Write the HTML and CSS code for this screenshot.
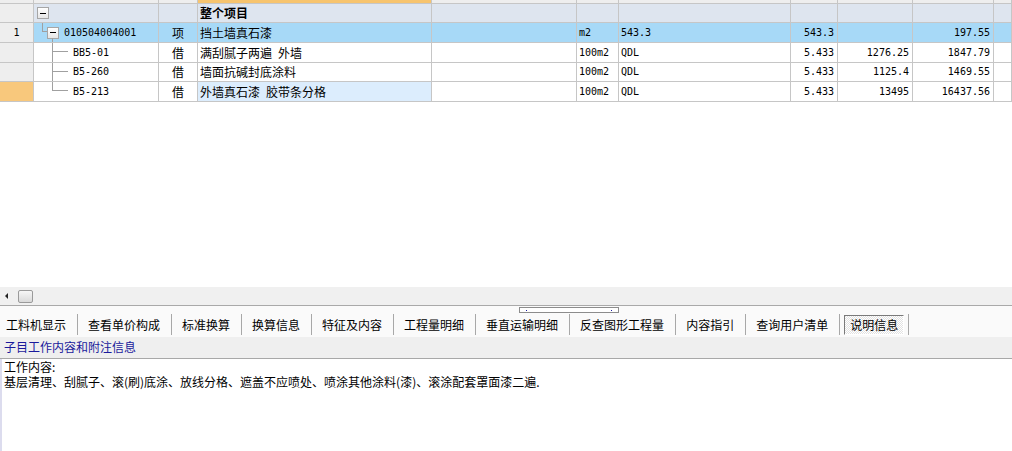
FILE: index.html
```html
<!DOCTYPE html>
<html lang="zh">
<head>
<meta charset="utf-8">
<link rel="stylesheet" href="styles.css">
</head>
<body>
<div class="app">
  <div class="grid-area">
    <div class="row r-top">
      <div class="cell"></div><div class="cell"></div><div class="cell"></div><div class="cell c-orange"></div><div class="cell"></div><div class="cell"></div><div class="cell"></div><div class="cell"></div><div class="cell"></div><div class="cell"></div><div class="cell"></div>
    </div>
    <div class="row r-head">
      <div class="cell c-rh"></div>
      <div class="cell tree"><span class="tbox tbox-root"></span></div>
      <div class="cell"></div>
      <div class="cell txt bold">整个项目</div>
      <div class="cell"></div><div class="cell"></div><div class="cell"></div><div class="cell"></div><div class="cell"></div><div class="cell"></div><div class="cell"></div>
    </div>
    <div class="row r-sel r20">
      <div class="cell c-rh num-c">1</div>
      <div class="cell tree tree-l1"><span class="tbox"></span><span class="code">010504004001</span></div>
      <div class="cell txt center">项</div>
      <div class="cell txt">挡土墙真石漆</div>
      <div class="cell"></div>
      <div class="cell mono">m2</div>
      <div class="cell mono">543.3</div>
      <div class="cell mono right">543.3</div>
      <div class="cell"></div>
      <div class="cell mono right">197.55</div>
      <div class="cell"></div>
    </div>
    <div class="row r-white r20">
      <div class="cell c-rh"></div>
      <div class="cell tree tree-child"><span class="code">BB5-01</span></div>
      <div class="cell txt center">借</div>
      <div class="cell txt">满刮腻子两遍&ensp;外墙</div>
      <div class="cell"></div>
      <div class="cell mono">100m2</div>
      <div class="cell mono">QDL</div>
      <div class="cell mono right">5.433</div>
      <div class="cell mono right">1276.25</div>
      <div class="cell mono right">1847.79</div>
      <div class="cell"></div>
    </div>
    <div class="row r-white r19">
      <div class="cell c-rh"></div>
      <div class="cell tree tree-child"><span class="code">B5-260</span></div>
      <div class="cell txt center">借</div>
      <div class="cell txt">墙面抗碱封底涂料</div>
      <div class="cell"></div>
      <div class="cell mono">100m2</div>
      <div class="cell mono">QDL</div>
      <div class="cell mono right">5.433</div>
      <div class="cell mono right">1125.4</div>
      <div class="cell mono right">1469.55</div>
      <div class="cell"></div>
    </div>
    <div class="row r-white r20">
      <div class="cell c-rh c-rh-cur"></div>
      <div class="cell tree tree-child tree-last"><span class="code">B5-213</span></div>
      <div class="cell txt center">借</div>
      <div class="cell txt c-focus">外墙真石漆&ensp;胶带条分格</div>
      <div class="cell"></div>
      <div class="cell mono">100m2</div>
      <div class="cell mono">QDL</div>
      <div class="cell mono right">5.433</div>
      <div class="cell mono right">13495</div>
      <div class="cell mono right">16437.56</div>
      <div class="cell"></div>
    </div>
  </div>

  <div class="hscroll">
    <span class="arrow-left"></span>
    <span class="thumb"></span>
  </div>

  <div class="tabbar">
    <div class="grip"><span class="dot"></span><span class="dot"></span></div>
    <div class="tabs">
      <span class="tab">工料机显示</span><span class="sep"></span>
      <span class="tab">查看单价构成</span><span class="sep"></span>
      <span class="tab">标准换算</span><span class="sep"></span>
      <span class="tab">换算信息</span><span class="sep"></span>
      <span class="tab">特征及内容</span><span class="sep"></span>
      <span class="tab">工程量明细</span><span class="sep"></span>
      <span class="tab">垂直运输明细</span><span class="sep"></span>
      <span class="tab">反查图形工程量</span><span class="sep"></span>
      <span class="tab">内容指引</span><span class="sep"></span>
      <span class="tab">查询用户清单</span><span class="sep sep-before-active"></span>
      <span class="tab tab-active">说明信息</span><span class="sep sep-after-active"></span>
    </div>
  </div>

  <div class="info-head">子目工作内容和附注信息</div>

  <div class="content">
    <div class="line">工作内容:</div>
    <div class="line">基层清理、刮腻子、滚(刷)底涂、放线分格、遮盖不应喷处、喷涂其他涂料(漆)、滚涂配套罩面漆二遍.</div>
  </div>
</div>
</body>
</html>
```

FILE: styles.css
```css
html, body {
  margin: 0;
  padding: 0;
  background: #ffffff;
}

body {
  width: 1012px;
  height: 451px;
  overflow: hidden;
  font-family: "Noto Sans CJK SC", "DejaVu Sans", sans-serif;
  font-size: 12px;
  color: #000;
}

.app {
  display: flex;
  flex-direction: column;
  width: 1012px;
  height: 451px;
}

/* ---------- grid ---------- */
.grid-area {
  height: 287px;
  background: #ffffff;
  flex: none;
}

.row {
  display: grid;
  grid-template-columns: 34px 125px 39px 234px 145px 42px 172px 47px 75px 81px 18px;
}

.cell {
  box-sizing: border-box;
  border-right: 1px solid #c6c6c6;
  border-bottom: 1px solid #c6c6c6;
  overflow: hidden;
  white-space: nowrap;
  padding: 0 2px;
}

.r-top { height: 4px; background: #eeeeee; }
.r-top .cell { padding: 0; }
.c-orange { background: #f7c46e; }

.r-head { height: 19px; background: #dee5ef; line-height: 18px; }
.r-sel { background: #a7d9f7; }
.r-white { background: #ffffff; }
.r20 { height: 20px; line-height: 19px; }
.r19 { height: 19px; line-height: 18px; }

.c-rh { background: #eeeeee; }
.c-rh-cur { background: #f8c87c; }
.c-focus { background: #dcedfd; }

.txt { font-size: 12px; }
.bold { font-weight: bold; }
.center { text-align: center; padding: 0; }
.right { text-align: right; padding-right: 3px; }

.mono, .code, .num-c {
  font-family: "DejaVu Sans Mono", "Liberation Mono", monospace;
  font-size: 10px;
}
.num-c { text-align: center; }

/* tree column */
.tree {
  position: relative;
  display: flex;
  align-items: center;
  padding: 0;
}

.tbox {
  flex: none;
  box-sizing: border-box;
  width: 12px;
  height: 12px;
  border: 1px solid #a6a6a6;
  background: linear-gradient(#ffffff, #e6e6e6);
  display: flex;
  align-items: center;
  justify-content: center;
}
.tbox::after {
  content: "";
  width: 6px;
  height: 1px;
  background: #000;
}
.tbox-root { margin-left: 3px; }

.tree-l1 .tbox { margin-left: 13px; }
.tree-l1 .code { margin-left: 5px; }

/* connector from root box to level-1 box */
.tree-l1::before {
  content: "";
  position: absolute;
  left: 8px;
  top: -5px;
  width: 5px;
  height: 14px;
  box-sizing: border-box;
  border-left: 1px solid #a0a0a0;
  border-bottom: 1px solid #a0a0a0;
}
/* line down from level-1 box */
.tree-l1::after {
  content: "";
  position: absolute;
  left: 18px;
  top: 15px;
  width: 1px;
  height: 5px;
  background: #a0a0a0;
}

.tree-child .code { margin-left: 39px; }
.tree-child::before {
  content: "";
  position: absolute;
  left: 18px;
  top: -1px;
  bottom: -1px;
  width: 1px;
  background: #a0a0a0;
}
.tree-last::before { bottom: auto; height: 10px; }
.tree-child::after {
  content: "";
  position: absolute;
  left: 18px;
  top: 8px;
  width: 16px;
  height: 1px;
  background: #a0a0a0;
}

/* ---------- horizontal scrollbar ---------- */
.hscroll {
  flex: none;
  height: 18px;
  background: #f0f0f0;
  border-bottom: 1px solid #a9a9a9;
  display: flex;
  align-items: center;
}
.arrow-left {
  width: 0;
  height: 0;
  margin-left: 5px;
  border-top: 3px solid transparent;
  border-bottom: 3px solid transparent;
  border-right: 3px solid #222;
}
.thumb {
  box-sizing: border-box;
  width: 15px;
  height: 13px;
  margin-left: 10px;
  border: 1px solid #9a9a9a;
  border-radius: 2px;
  background: linear-gradient(#f6f6f6, #dadada);
}

/* ---------- tab bar ---------- */
.tabbar {
  flex: none;
  height: 31px;
  background: #fafafa;
  box-sizing: border-box;
  padding-top: 1px;
}
.grip {
  box-sizing: border-box;
  width: 100px;
  height: 6px;
  margin-left: 519px;
  border: 1px solid #8c8c8c;
  background: #ffffff;
  display: flex;
  justify-content: space-between;
  align-items: center;
  padding: 0 6px;
}
.dot {
  width: 1px;
  height: 1px;
  background: #1a1aa0;
}
.tabs {
  display: flex;
  align-items: center;
  height: 21px;
  margin-top: 1px;
  padding-left: 6px;
}
.tab {
  line-height: 20px;
  white-space: nowrap;
}
.sep {
  width: 1px;
  height: 21px;
  background: #a8a8a8;
  margin: 0 10px 0 11px;
}
.sep-before-active { margin: 0 4px 0 11px; }
.sep-after-active { margin: 0 4px 0 4px; }
.tab-active {
  box-sizing: border-box;
  height: 20px;
  line-height: 18px;
  padding: 0 5px;
  border-top: 1px solid #7a7a7a;
  border-left: 1px solid #7a7a7a;
  border-right: 1px solid #ffffff;
  border-bottom: 1px solid #ffffff;
  background: repeating-conic-gradient(#ffffff 0 25%, #e2e2e2 0 50%) 0 0 / 2px 2px;
}

/* ---------- info header ---------- */
.info-head {
  flex: none;
  height: 21px;
  line-height: 19px;
  background: #efefef;
  color: #1a1a9c;
  padding-left: 4px;
  border-bottom: 1px solid #a8a8a8;
}

/* ---------- content ---------- */
.content {
  flex: 1;
  border-left: 2px solid #dcdcee;
  padding-left: 2px;
  background: #ffffff;
}
.line {
  line-height: 15px;
  white-space: nowrap;
}
```
